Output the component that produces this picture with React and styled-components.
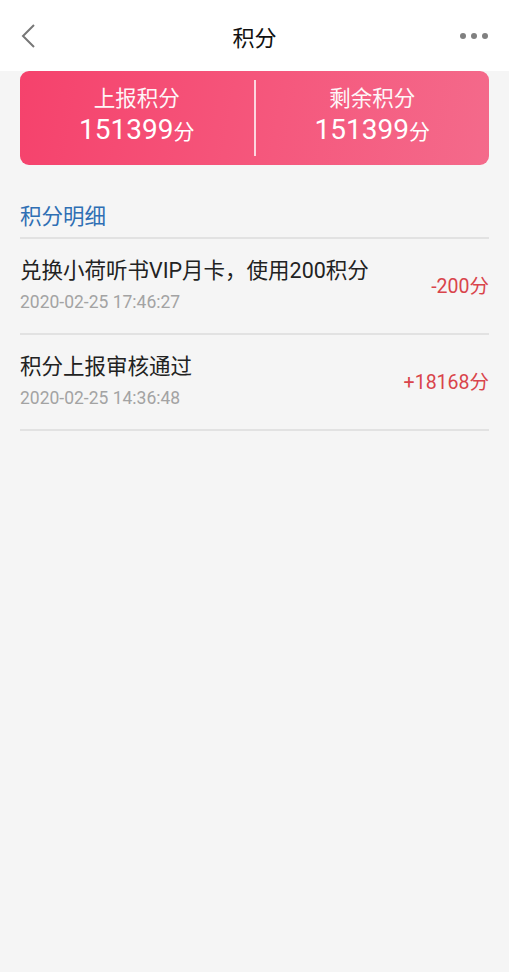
import styled, { createGlobalStyle } from 'styled-components';

const GlobalStyle = createGlobalStyle`
    html, body {
        margin: 0;
        padding: 0;
        background: #f5f5f5;
        font-family: Roboto, "Noto Sans CJK SC", sans-serif;
    }
`;

const Page = styled.div`
    width: 509px;
    min-height: 972px;
    background: #f5f5f5;
`;

const Header = styled.div`
    height: 71px;
    background: #fff;
    display: flex;
    align-items: center;
    justify-content: space-between;
    padding: 0 20px;
    box-sizing: border-box;
`;

const Title = styled.div`
    font-family: "Noto Sans CJK SC", sans-serif;
    font-size: 22px;
    color: #111;
    font-weight: 400;
`;

const IconBtn = styled.div`
    width: 30px;
    display: flex;
    justify-content: ${props => props.right ? 'flex-end' : 'flex-start'};
`;

const Card = styled.div`
    margin: 0 20px;
    height: 94px;
    border-radius: 9px;
    background: linear-gradient(100deg, #f5426c 0%, #f5587d 55%, #f46a8b 100%);
    display: flex;
    align-items: center;
`;

const Stat = styled.div`
    flex: 1;
    display: flex;
    flex-direction: column;
    align-items: center;
    color: #fff;
    padding-bottom: 6px;
`;

const StatLabel = styled.div`
    font-family: "Noto Sans CJK SC", sans-serif;
    font-size: 21.5px;
    line-height: 30px;
    opacity: 0.95;
`;

const StatValue = styled.div`
    font-size: 28px;
    line-height: 36px;
    span {
        font-family: "Noto Sans CJK SC", sans-serif;
        font-size: 21px;
    }
`;

const Divider = styled.div`
    width: 2px;
    height: 76px;
    background: rgba(255, 255, 255, 0.75);
`;

const Section = styled.div`
    padding: 0 20px;
`;

const SectionTitle = styled.div`
    font-family: "Noto Sans CJK SC", sans-serif;
    font-size: 21.5px;
    color: #2f6fb4;
    padding-top: 34px;
    height: 38px;
    line-height: 32px;
    border-bottom: 2px solid #e2e2e2;
`;

const Row = styled.div`
    display: flex;
    align-items: center;
    justify-content: space-between;
    height: 94px;
    border-bottom: 2px solid #e2e2e2;
`;

const RowText = styled.div`
    display: flex;
    flex-direction: column;
    gap: 4px;
    padding-bottom: 2px;
`;

const RowTitle = styled.div`
    font-family: Roboto, "Noto Sans CJK SC", sans-serif;
    font-size: 21.5px;
    color: #222;
    line-height: 30px;
`;

const RowDate = styled.div`
    font-size: 17.5px;
    color: #a3a3a3;
    line-height: 24px;
`;

const Amount = styled.div`
    font-size: 19.5px;
    color: #d9444b;
    padding-bottom: 4px;
`;

const records = [
    { title: '兑换小荷听书VIP月卡，使用200积分', date: '2020-02-25 17:46:27', amount: '-200' },
    { title: '积分上报审核通过', date: '2020-02-25 14:36:48', amount: '+18168' },
];

export default function App() {
    return (
        <Page>
            <GlobalStyle />
            <Header>
                <IconBtn>
                    <svg width="16" height="26" viewBox="0 0 16 26">
                        <path d="M14 2 L3 13 L14 24" fill="none" stroke="#777" strokeWidth="2" />
                    </svg>
                </IconBtn>
                <Title>积分</Title>
                <IconBtn right>
                    <svg width="30" height="8" viewBox="0 0 30 8">
                        <circle cx="4" cy="4" r="3" fill="#808080" />
                        <circle cx="15" cy="4" r="3" fill="#808080" />
                        <circle cx="26" cy="4" r="3" fill="#808080" />
                    </svg>
                </IconBtn>
            </Header>
            <Card>
                <Stat>
                    <StatLabel>上报积分</StatLabel>
                    <StatValue>151399<span>分</span></StatValue>
                </Stat>
                <Divider />
                <Stat>
                    <StatLabel>剩余积分</StatLabel>
                    <StatValue>151399<span>分</span></StatValue>
                </Stat>
            </Card>
            <Section>
                <SectionTitle>积分明细</SectionTitle>
                {records.map(r => (
                    <Row key={r.date}>
                        <RowText>
                            <RowTitle>{r.title}</RowTitle>
                            <RowDate>{r.date}</RowDate>
                        </RowText>
                        <Amount>{r.amount}分</Amount>
                    </Row>
                ))}
            </Section>
        </Page>
    );
}
